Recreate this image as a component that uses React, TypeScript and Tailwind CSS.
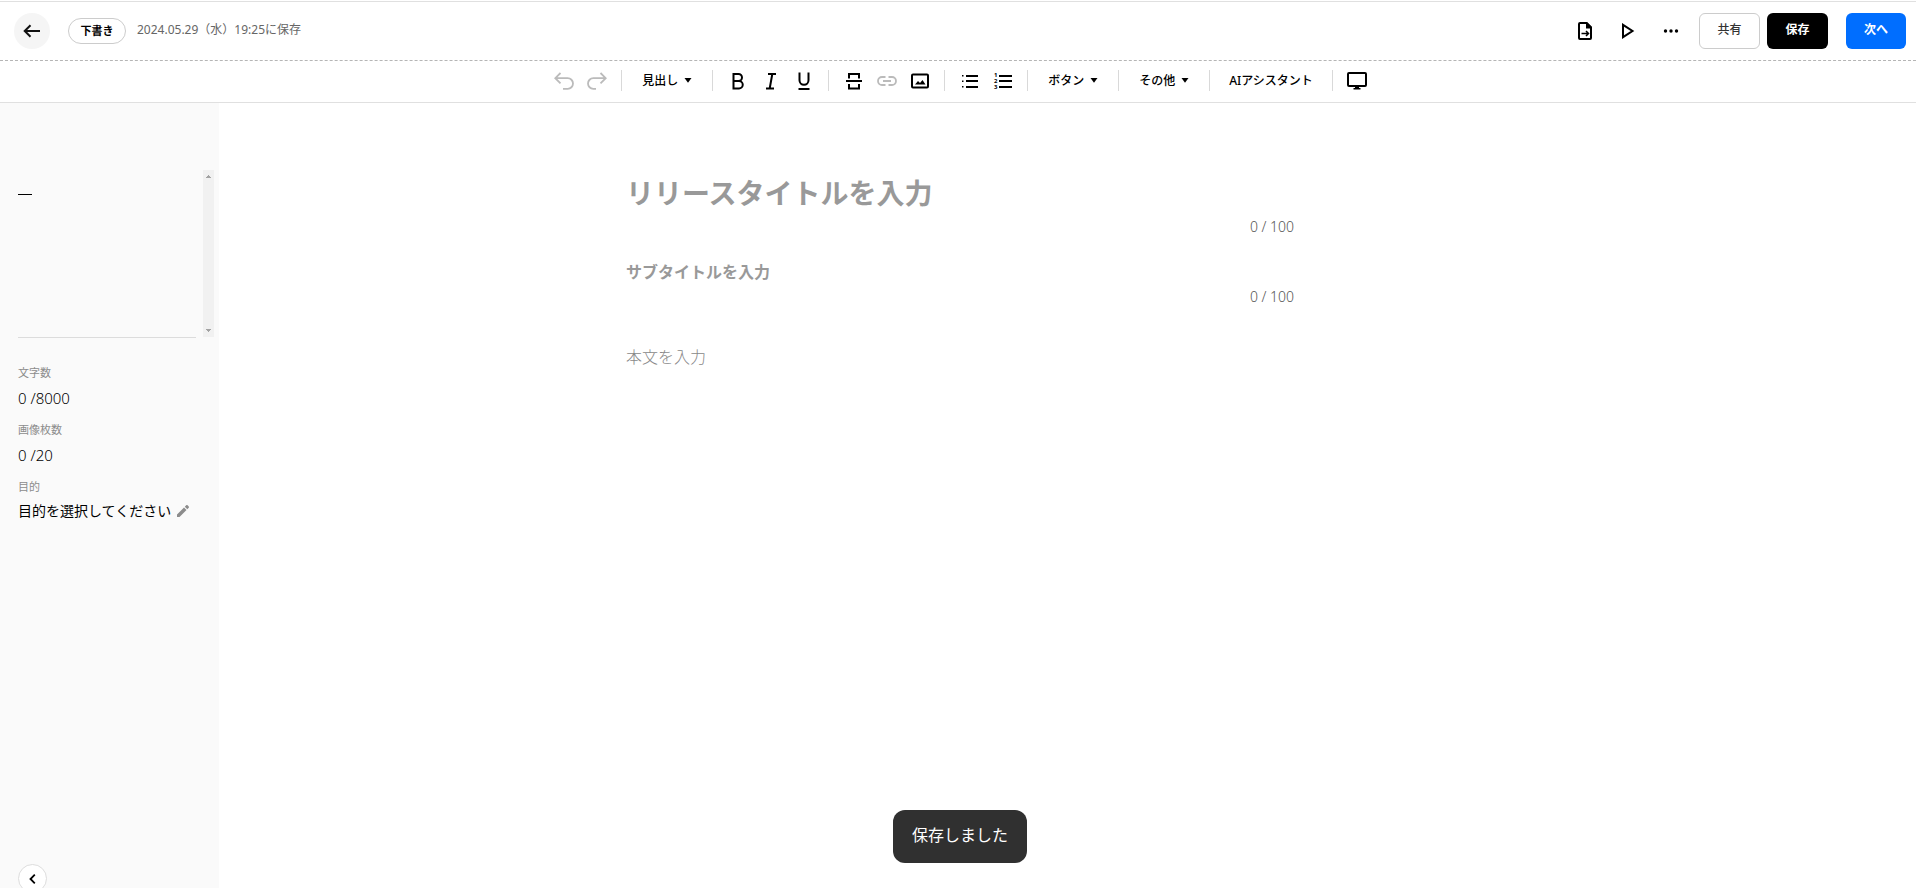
import type { ReactNode } from 'react';

function BackIcon() {
  return (
    <svg width="18" height="14" viewBox="0 0 18 14" fill="none" stroke="#111" strokeWidth="2">
      <path d="M17 7H2M7.500 1.200 1.700 7l5.800 5.800" />
    </svg>
  );
}

function FileExportIcon() {
  return (
    <svg width="14" height="18" viewBox="0 0 14 18" fill="none">
      <path d="M8.500 1H2a1 1 0 0 0-1 1v14a1 1 0 0 0 1 1h10a1 1 0 0 0 1-1V5.500z" stroke="#000" strokeWidth="2" />
      <path d="M8 0h1l5 5v1.500H8z" fill="#000" />
      <path d="M3.500 11.500h6.500M8 9l2.500 2.500L8 14" stroke="#000" strokeWidth="1.500" />
    </svg>
  );
}

function PlayIcon() {
  return (
    <svg width="14" height="16" viewBox="0 0 14 16" fill="none">
      <path d="M2 1.800v12.400L11.500 8z" stroke="#000" strokeWidth="2" />
    </svg>
  );
}

function DotsIcon() {
  return (
    <svg width="16" height="4" viewBox="0 0 16 4" fill="#000">
      <circle cx="2.500" cy="2" r="1.700" />
      <circle cx="8" cy="2" r="1.700" />
      <circle cx="13.500" cy="2" r="1.700" />
    </svg>
  );
}

function UndoIcon() {
  return (
    <svg width="20" height="18" viewBox="0 0 20 18" fill="none" stroke="currentColor" strokeWidth="1.800">
      <path d="M6.500 1 1.300 6.200l5.200 5.200M1.500 6.200h12.200a5.300 5.300 0 0 1 0 10.600H9" />
    </svg>
  );
}

function RedoIcon() {
  return (
    <svg width="20" height="18" viewBox="0 0 20 18" fill="none" stroke="currentColor" strokeWidth="1.800">
      <path d="m13.500 1 5.200 5.200-5.200 5.200M18.500 6.200H6.300a5.300 5.300 0 0 0 0 10.600H9" />
    </svg>
  );
}

function BoldIcon() {
  return (
    <svg width="20" height="20" viewBox="0 0 20 20" fill="none" stroke="#000" strokeWidth="2">
      <path d="M5.500 3h5a3.500 3.500 0 0 1 0 7h-5zM5.500 10h5.500a3.700 3.700 0 0 1 0 7.500H5.500z" />
    </svg>
  );
}

function ItalicIcon() {
  return (
    <svg width="20" height="20" viewBox="0 0 20 20" fill="none" stroke="#000" strokeWidth="2">
      <path d="M7 3h8M5 17.500h8M11.300 3 8.700 17.500" />
    </svg>
  );
}

function UnderlineIcon() {
  return (
    <svg width="20" height="20" viewBox="0 0 20 20" fill="none" stroke="#000" strokeWidth="2">
      <path d="M5.500 1.500v7.800a4.500 4.500 0 0 0 9 0V1.500M4.500 18h11" />
    </svg>
  );
}

function RuleIcon() {
  return (
    <svg width="20" height="20" viewBox="0 0 20 20" fill="none" stroke="#000" strokeWidth="2">
      <path d="M5 7.500V3h10v4.500M2 10h16M5 13v4.500h10V13" />
    </svg>
  );
}

function LinkIcon() {
  return (
    <svg width="20" height="20" viewBox="0 0 20 20" fill="none" stroke="currentColor" strokeWidth="1.800">
      <path d="M8.500 6H5a4 4 0 0 0 0 8h3.500M11.500 6H15a4 4 0 0 1 0 8h-3.500M6 10h8" />
    </svg>
  );
}

function ImageIcon() {
  return (
    <svg width="20" height="20" viewBox="0 0 20 20" fill="none">
      <rect x="2" y="3.500" width="16" height="13" rx="1" stroke="#000" strokeWidth="2" />
      <path d="M5 13.500 8 10l2 2 2.500-3 3 4.500z" fill="#000" />
    </svg>
  );
}

function BulletListIcon() {
  return (
    <svg width="20" height="20" viewBox="0 0 20 20" fill="#000">
      <path d="M2 4h1.500v1.500H2zM2 9.500h1.500V11H2zM2 15h1.500v1.500H2zM6 4h12v2H6zM6 9h12v2H6zM6 15h12v2H6z" />
    </svg>
  );
}

function NumberListIcon() {
  return (
    <svg width="20" height="20" viewBox="0 0 20 20" fill="#000" fontSize="6" fontWeight="700">
      <path d="M6 4h13v2H6zM6 9h13v2H6zM6 15h13v2H6z" />
      <text x="1" y="6">1</text>
      <text x="1" y="12">2</text>
      <text x="1" y="18">3</text>
    </svg>
  );
}

function MonitorIcon() {
  return (
    <svg width="20" height="18" viewBox="0 0 20 18" fill="none">
      <rect x="1" y="1" width="18" height="13" rx="1" stroke="#000" strokeWidth="2" />
      <path d="M8 14h4v2h1.500v1.500h-7V16H8z" fill="#000" />
    </svg>
  );
}

function Caret() {
  return (
    <svg width="8" height="5" viewBox="0 0 8 5" fill="#000">
      <path d="M.5 0h7L4 4.800z" />
    </svg>
  );
}

function ToolGroup({ children }: { children: ReactNode }) {
  return <div className="flex items-center px-2">{children}</div>;
}

function Divider() {
  return <div className="h-[21px] w-px bg-[#d9d9d9]" />;
}

function ToolButton({ label, disabled, children }: { label: string; disabled?: boolean; children: ReactNode }) {
  return (
    <button
      type="button"
      aria-label={label}
      disabled={disabled}
      className="flex h-8 w-[33px] items-center justify-center disabled:text-[#bbb]"
    >
      {children}
    </button>
  );
}

function MenuButton({ children }: { children: ReactNode }) {
  return (
    <button type="button" className="flex h-8 items-center gap-[6px] px-5 text-xs font-medium">
      {children}
      <Caret />
    </button>
  );
}

function TopBar() {
  return (
    <header className="mt-px flex h-[60px] items-center justify-between border-t border-b border-t-[#e0e0e0] border-b-[#b5b5b5] [border-bottom-style:dashed] pr-[10px] pl-[14px]">
      <div className="flex items-center">
        <button type="button" aria-label="戻る" className="flex size-9 items-center justify-center rounded-full bg-[#f5f5f5]">
          <BackIcon />
        </button>
        <span className="ml-[18px] flex h-[26px] w-[58px] items-center justify-center rounded-full border border-[#ccc] text-[11px] font-bold">
          下書き
        </span>
        <span className="ml-[11px] pb-[2px] text-xs text-[#666]">2024.05.29（水）19:25に保存</span>
      </div>

      <div className="flex items-center">
        <button type="button" aria-label="書き出し" className="flex h-9 w-[43px] items-center justify-center">
          <FileExportIcon />
        </button>
        <button type="button" aria-label="プレビュー" className="flex h-9 w-[43px] items-center justify-center">
          <PlayIcon />
        </button>
        <button type="button" aria-label="メニュー" className="flex h-9 w-[43px] items-center justify-center">
          <DotsIcon />
        </button>
        <button type="button" className="ml-[7px] h-9 w-[61px] rounded-md border border-[#ccc] pb-[2px] text-xs font-medium text-[#333]">
          共有
        </button>
        <button type="button" className="ml-[7px] h-9 w-[61px] rounded-md bg-black pb-[2px] text-xs font-bold text-white">
          保存
        </button>
        <button type="button" className="ml-[18px] h-9 w-[60px] rounded-md bg-[#006eff] pb-[2px] text-xs font-bold text-white">
          次へ
        </button>
      </div>
    </header>
  );
}

function Toolbar() {
  return (
    <div className="flex h-[42px] items-center justify-center border-b border-[#e0e0e0] pb-[2px] pl-[5px]">
      <ToolGroup>
        <ToolButton label="元に戻す" disabled><UndoIcon /></ToolButton>
        <ToolButton label="やり直す" disabled><RedoIcon /></ToolButton>
      </ToolGroup>
      <Divider />
      <MenuButton>見出し</MenuButton>
      <Divider />
      <ToolGroup>
        <ToolButton label="太字"><BoldIcon /></ToolButton>
        <ToolButton label="斜体"><ItalicIcon /></ToolButton>
        <ToolButton label="下線"><UnderlineIcon /></ToolButton>
      </ToolGroup>
      <Divider />
      <ToolGroup>
        <ToolButton label="区切り線"><RuleIcon /></ToolButton>
        <ToolButton label="リンク" disabled><LinkIcon /></ToolButton>
        <ToolButton label="画像"><ImageIcon /></ToolButton>
      </ToolGroup>
      <Divider />
      <ToolGroup>
        <ToolButton label="箇条書き"><BulletListIcon /></ToolButton>
        <ToolButton label="番号付きリスト"><NumberListIcon /></ToolButton>
      </ToolGroup>
      <Divider />
      <MenuButton>ボタン</MenuButton>
      <Divider />
      <MenuButton>その他</MenuButton>
      <Divider />
      <button type="button" className="h-8 px-[19px] text-xs font-medium">AIアシスタント</button>
      <Divider />
      <ToolGroup>
        <ToolButton label="表示切替"><MonitorIcon /></ToolButton>
      </ToolGroup>
    </div>
  );
}

function Sidebar() {
  return (
    <aside className="flex w-[219px] shrink-0 flex-col overflow-hidden bg-[#fafafa] pt-[67px] pl-[18px]">
      <div className="flex h-[168px] shrink-0 justify-between pr-[5px]">
        <div className="w-[178px] border-b border-[#dcdcdc] pt-6">
          <div className="h-px w-[14px] bg-black" />
        </div>
        {/* scroll track of the outline list */}
        <div className="flex h-[167px] w-[11px] flex-col items-center justify-between bg-[#f1f1f1] py-[5px]">
          <svg width="5" height="3" viewBox="0 0 5 3" fill="#a3a3a3"><path d="M2 0h1v1h1v1h1v1H0V2h1V1h1z" /></svg>
          <svg width="5" height="3" viewBox="0 0 5 3" fill="#a3a3a3"><path d="M0 0h5v1H4v1H3v1H2V2H1V1H0z" /></svg>
        </div>
      </div>

      <dl className="mt-[27px]">
        <dt className="text-[11px] leading-4 text-[#8c8c8c]">文字数</dt>
        <dd className="mt-[3px] mb-[9px] text-[15px] leading-[29px] font-light whitespace-pre">0 /8000</dd>
        <dt className="text-[11px] leading-4 text-[#8c8c8c]">画像枚数</dt>
        <dd className="mt-[3px] mb-[9px] text-[15px] leading-[29px] font-light whitespace-pre">0 /20</dd>
        <dt className="text-[11px] leading-4 text-[#8c8c8c]">目的</dt>
        <dd className="mt-1 flex items-center gap-[6px] text-[14px] leading-6">
          目的を選択してください
          <button type="button" aria-label="目的を編集">
            <svg width="12" height="12" viewBox="0 0 12 12" fill="#8c8c8c">
              <path d="M0 12V9.500L7 2.500 9.500 5l-7 7zM7.800 1.700 9.200.3a1 1 0 0 1 1.400 0l1.100 1.100a1 1 0 0 1 0 1.400l-1.400 1.400z" />
            </svg>
          </button>
        </dd>
      </dl>

      <button
        type="button"
        aria-label="サイドバーを閉じる"
        className="mt-auto -mb-[5px] flex size-[29px] shrink-0 items-center justify-center rounded-full border border-[#ddd] bg-white"
      >
        <svg width="7" height="10" viewBox="0 0 7 10" fill="none" stroke="#000" strokeWidth="1.800">
          <path d="M5.800.7 1.500 5l4.300 4.300" />
        </svg>
      </button>
    </aside>
  );
}

function Editor() {
  return (
    <main className="flex-1 overflow-hidden pt-[66px]">
      {/* shifted left by the sidebar so the column sits in the middle of the window */}
      <div className="mx-auto w-full max-w-[883px] pr-[215px]">
        <input
          aria-label="リリースタイトル"
          placeholder="リリースタイトルを入力"
          className="block h-12 w-full text-[28px] font-bold outline-none placeholder:text-[#999]"
        />
        <p className="text-right text-[14px] leading-5 font-light text-[#555]">0 / 100</p>
        <input
          aria-label="サブタイトル"
          placeholder="サブタイトルを入力"
          className="mt-[23px] block h-6 w-full text-base font-bold outline-none placeholder:text-[#999]"
        />
        <p className="mt-[3px] text-right text-[14px] leading-5 font-light text-[#555]">0 / 100</p>
        <textarea
          aria-label="本文"
          placeholder="本文を入力"
          rows={8}
          className="mt-[38px] block w-full resize-none text-base leading-6 font-light outline-none placeholder:text-[#888]"
        />
      </div>
    </main>
  );
}

export default function App() {
  return (
    <div className="flex h-screen flex-col overflow-hidden bg-white font-['Noto_Sans','Noto_Sans_CJK_JP',sans-serif] text-black">
      <TopBar />
      <Toolbar />
      <div className="flex min-h-0 flex-1">
        <Sidebar />
        <Editor />
      </div>

      <div className="fixed inset-x-0 bottom-[25px] flex justify-center pl-1">
        <div role="status" className="flex h-[53px] items-center rounded-xl bg-[#303030] px-[19px] pb-1 text-base text-white">
          保存しました
        </div>
      </div>
    </div>
  );
}
